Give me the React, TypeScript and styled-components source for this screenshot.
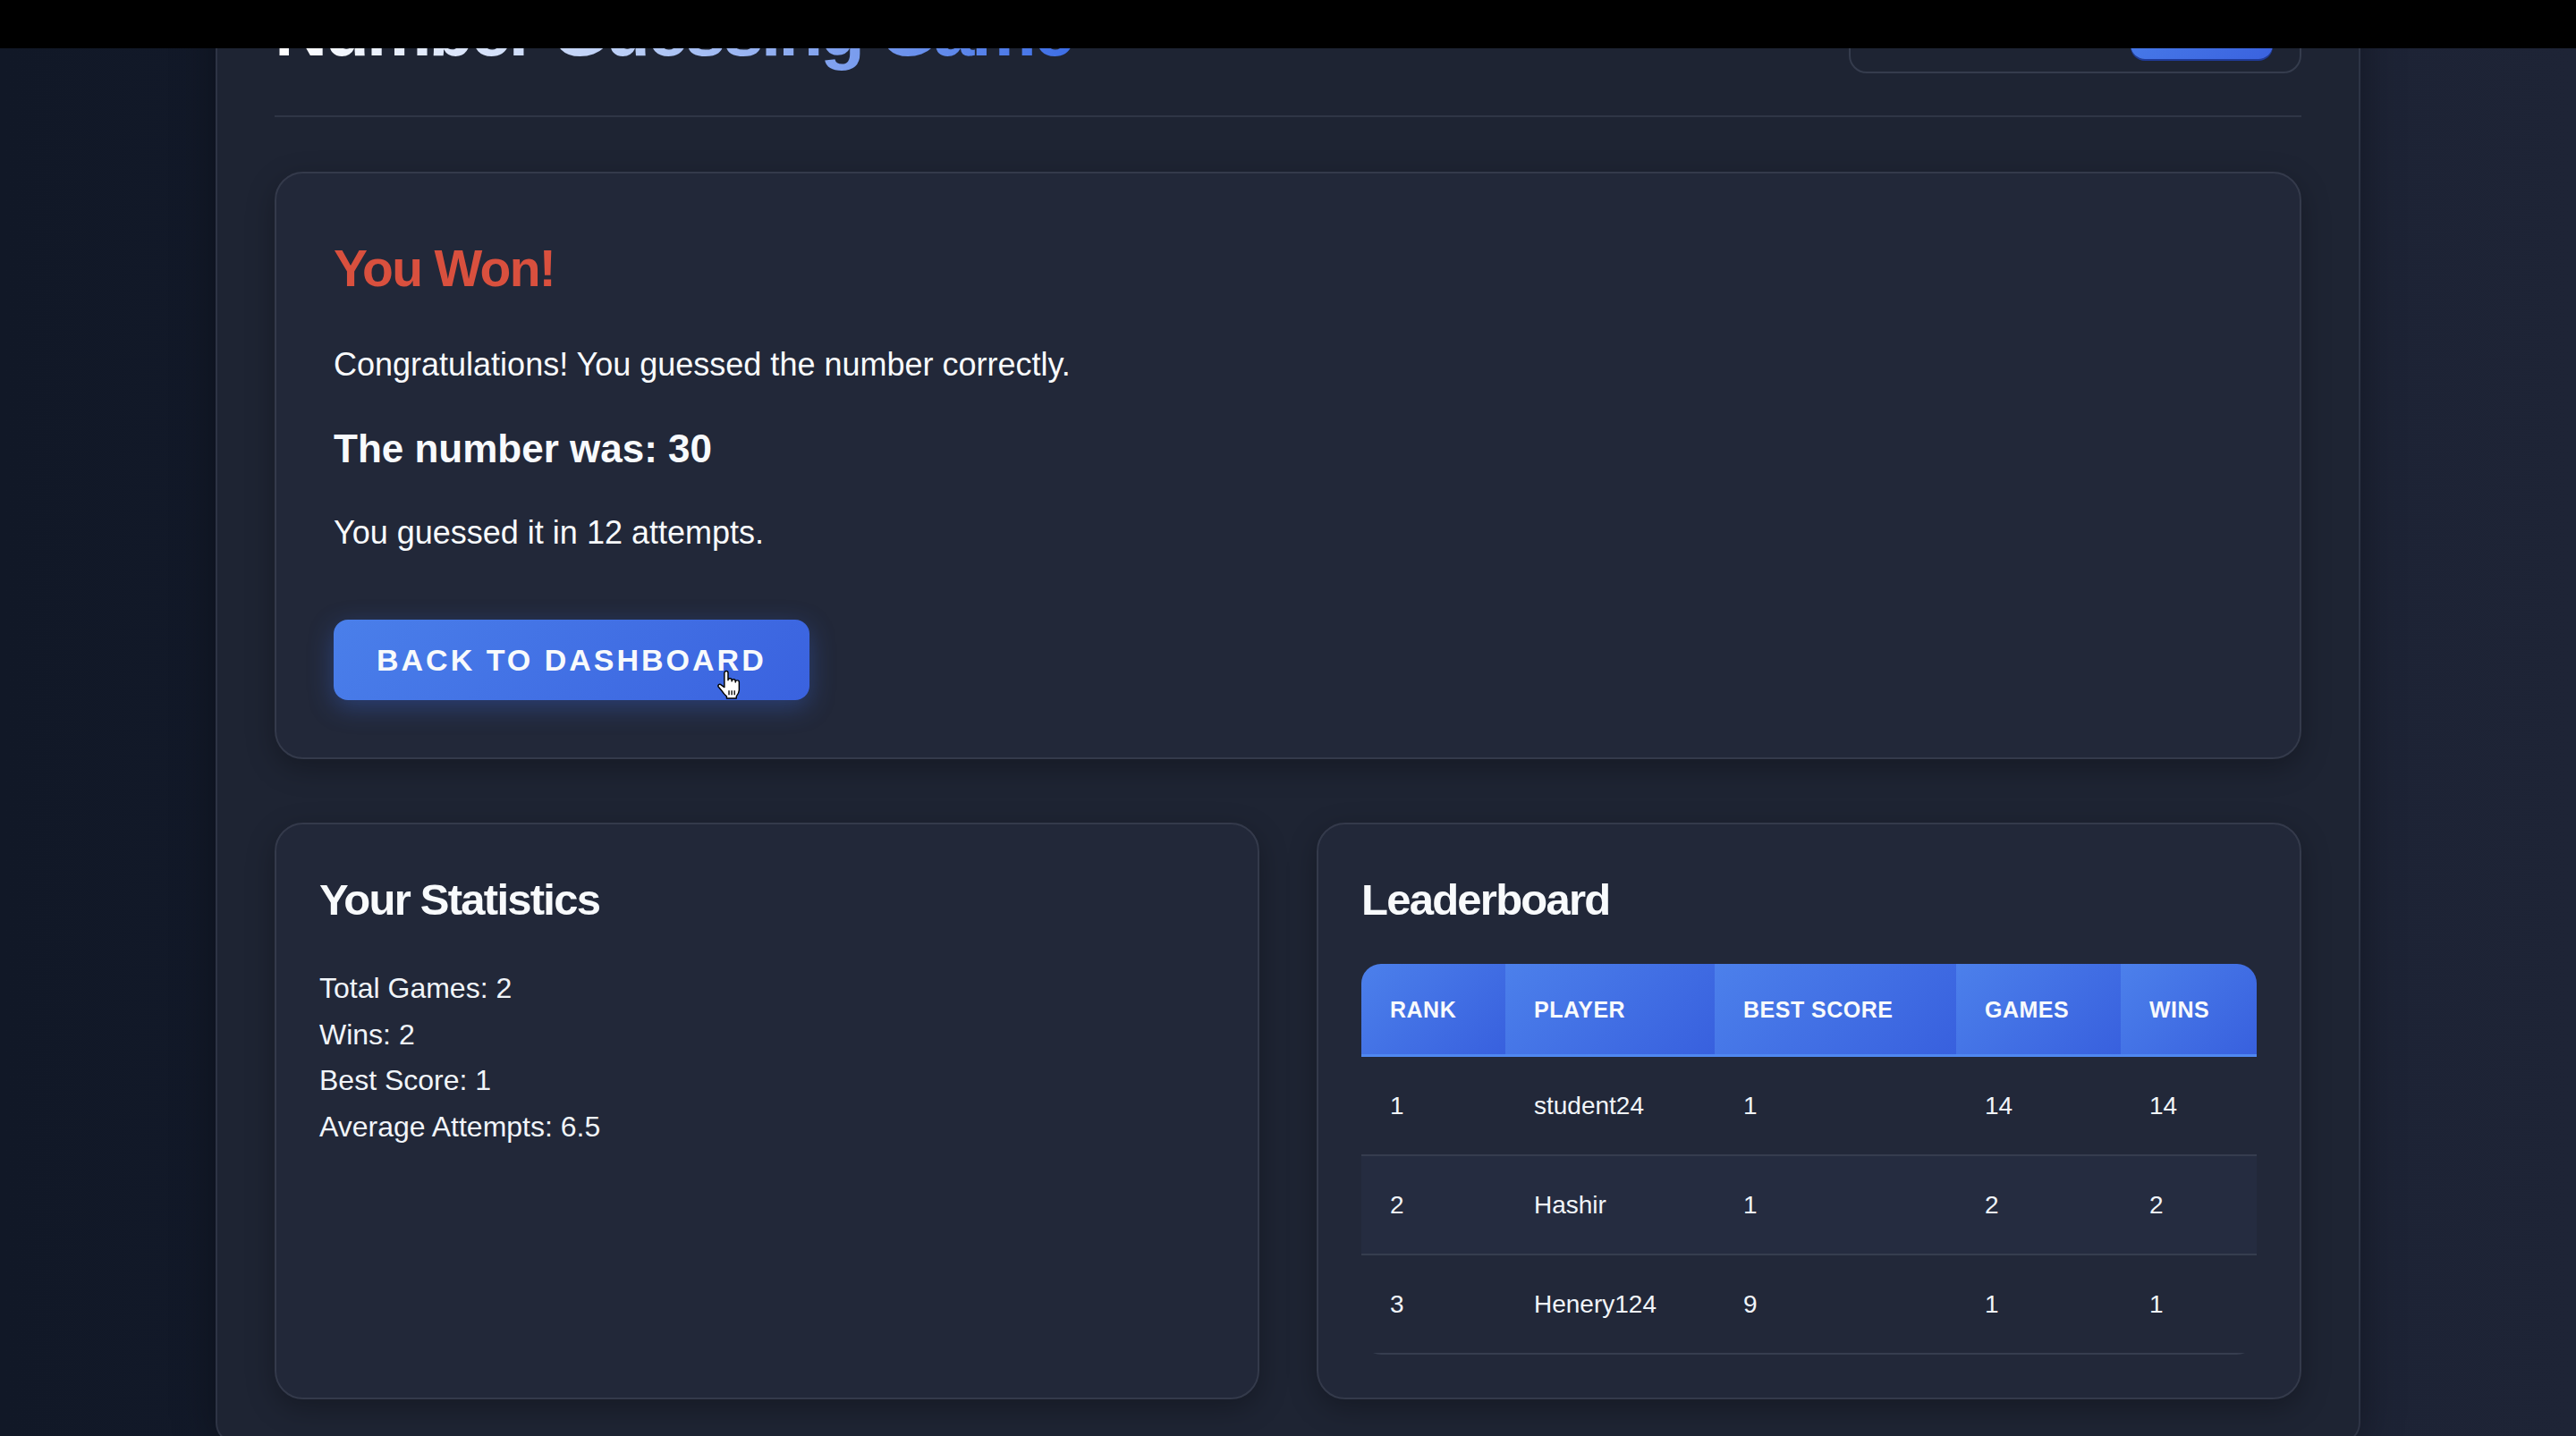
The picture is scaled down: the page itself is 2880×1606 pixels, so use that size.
import React from "react";
import styled, { createGlobalStyle } from "styled-components";

const GlobalStyle = createGlobalStyle`
  * { box-sizing: border-box; }
  html, body {
    margin: 0;
    padding: 0;
    height: 100%;
    overflow: hidden;
  }
  body {
    background: linear-gradient(90deg, #111827 0%, #171e30 50%, #1e2436 100%);
    font-family: "Liberation Sans", Arial, Helvetica, sans-serif;
    color: #f8fafc;
  }
`;

const TopBar = styled.div`
  position: fixed;
  top: 0;
  left: 0;
  right: 0;
  height: 54px;
  background: #000;
  z-index: 20;
`;

const Page = styled.main`
  width: 2398px;
  margin: -84px auto 0;
  background: #1e2433;
  border: 2px solid #2e3445;
  border-radius: 24px;
  padding: 64px 64px 48px;
  box-shadow: 0 0 48px rgba(0, 0, 0, 0.35);
`;

const Header = styled.header`
  display: flex;
  justify-content: space-between;
  align-items: flex-end;
  padding-bottom: 47px;
  border-bottom: 2px solid #2f3646;
  margin-bottom: 61px;
`;

const Title = styled.h1`
  margin: 0;
  font-size: 82px;
  line-height: 97px;
  font-weight: 700;
  letter-spacing: -3.3px;
  background: linear-gradient(90deg, #ffffff 0%, #b9cdf6 45%, #3d6ee6 100%);
  -webkit-background-clip: text;
  background-clip: text;
  color: transparent;
`;

const UserBox = styled.div`
  display: flex;
  align-items: center;
  gap: 40px;
  padding: 14px 30px;
  border: 2px solid #353c4d;
  border-radius: 20px;
`;

const Welcome = styled.span`
  font-size: 32px;
  line-height: 37px;
  color: #e2e8f0;
`;

const SmallButton = styled.button`
  height: 68px;
  padding: 0 32px;
  border: none;
  border-radius: 16px;
  font: 700 28px/32px "Liberation Sans", Arial, sans-serif;
  color: #fff;
  background: linear-gradient(135deg, #4a7fea 0%, #3a62df 100%);
  box-shadow: 0 2px 0 #1f3b9a;
`;

const Card = styled.section<{ $pad: number }>`
  display: flex;
  flex-direction: column;
  background: #222839;
  border: 2px solid #343a4b;
  border-radius: 32px;
  padding: ${(p) => p.$pad}px;
  box-shadow: 0 10px 32px rgba(0, 0, 0, 0.28);
`;

const WinTitle = styled.h2`
  margin: 9px 0 0;
  font-size: 57px;
  line-height: 66px;
  font-weight: 700;
  letter-spacing: -1.7px;
  color: #d9503e;
`;

const Message = styled.p<{ $mt: number }>`
  margin: ${(p) => p.$mt}px 0 0;
  font-size: 36px;
  line-height: 42px;
  color: #f8fafc;
`;

const Reveal = styled.h3`
  margin: 48px 0 0;
  font-size: 44px;
  line-height: 50px;
  font-weight: 700;
  color: #f8fafc;
`;

const PrimaryButton = styled.button`
  position: relative;
  align-self: flex-start;
  margin-top: 76px;
  padding: 26px 48px;
  border: none;
  border-radius: 16px;
  font: 700 34px/38px "Liberation Sans", Arial, sans-serif;
  letter-spacing: 3px;
  text-transform: uppercase;
  color: #f8fafc;
  background: linear-gradient(135deg, #4a7fea 0%, #3a62df 100%);
  box-shadow: 0 8px 28px rgba(59, 108, 230, 0.35);
`;

const Cursor = styled.svg`
  position: absolute;
  left: 426px;
  top: 56px;
  width: 31px;
  height: 34px;
`;

const Grid = styled.div`
  display: grid;
  grid-template-columns: 1fr 1fr;
  gap: 64px;
  margin-top: 71px;
`;

const SectionTitle = styled.h2`
  margin: 9px 0 44px;
  font-size: 49px;
  line-height: 55px;
  font-weight: 700;
  letter-spacing: -1.75px;
  color: #f8fafc;
`;

const StatList = styled.ul`
  list-style: none;
  margin: 2px 0 0;
  padding: 0;
`;

const StatItem = styled.li`
  font-size: 32px;
  line-height: 51.5px;
  color: #f1f5f9;
`;

const TableWrap = styled.div`
  border-radius: 22px;
  overflow: hidden;
`;

const Table = styled.table`
  width: 100%;
  border-collapse: separate;
  border-spacing: 0;
  table-layout: fixed;
`;

const Col = styled.col<{ $w: number }>`
  width: ${(p) => p.$w}px;
`;

const Th = styled.th`
  padding: 37px 32px 35px;
  text-align: left;
  font-size: 25px;
  line-height: 29px;
  font-weight: 700;
  letter-spacing: 0.5px;
  text-transform: uppercase;
  color: #f8fafc;
  background: linear-gradient(135deg, #4c80eb 0%, #3860de 100%);
  border-bottom: 3px solid #5088f1;
  white-space: nowrap;
`;

const Tr = styled.tr<{ $alt: boolean }>`
  background: ${(p) => (p.$alt ? "#252c40" : "transparent")};
`;

const Td = styled.td`
  padding: 39px 32px 38px;
  font-size: 28px;
  line-height: 32px;
  color: #f1f5f9;
  border-bottom: 2px solid #363d4f;
`;

const leaders = [
  { rank: 1, player: "student24", best: 1, games: 14, wins: 14 },
  { rank: 2, player: "Hashir", best: 1, games: 2, wins: 2 },
  { rank: 3, player: "Henery124", best: 9, games: 1, wins: 1 },
];

const colWidths = [161, 234, 270, 184, 152];

export default function App() {
  return (
    <>
      <GlobalStyle />
      <TopBar />
      <Page>
        <Header>
          <Title>Number Guessing Game</Title>
          <UserBox>
            <Welcome>Welcome, Hashir</Welcome>
            <SmallButton>Logout</SmallButton>
          </UserBox>
        </Header>

        <Card $pad={64}>
          <WinTitle>You Won!</WinTitle>
          <Message $mt={54}>Congratulations! You guessed the number correctly.</Message>
          <Reveal>The number was: 30</Reveal>
          <Message $mt={48}>You guessed it in 12 attempts.</Message>
          <PrimaryButton>
            Back to Dashboard
            <Cursor viewBox="0 0 28 33" aria-hidden="true">
              <path
                d="M9.5 3.5a2 2 0 0 1 4 0V11.5a2 2 0 0 1 4 0V12.5a2 2 0 0 1 4 0V13.5a2 2 0 0 1 4 0V22c0 3-1.5 5-3 7V31H12V29c-2-1.5-4-4-6-7L3 18.5a1.8 1.8 0 0 1 2.8-2.2L9.5 19Z"
                fill="#ffffff"
                stroke="#000000"
                strokeWidth="1.4"
                strokeLinejoin="round"
              />
              <path d="M14.5 22.5v5M17.5 22.5v5M20.5 22.5v5" stroke="#000" strokeWidth="1.3" />
            </Cursor>
          </PrimaryButton>
        </Card>

        <Grid>
          <Card $pad={48}>
            <SectionTitle>Your Statistics</SectionTitle>
            <StatList>
              <StatItem>Total Games: 2</StatItem>
              <StatItem>Wins: 2</StatItem>
              <StatItem>Best Score: 1</StatItem>
              <StatItem>Average Attempts: 6.5</StatItem>
            </StatList>
          </Card>

          <Card $pad={48}>
            <SectionTitle>Leaderboard</SectionTitle>
            <TableWrap>
              <Table>
                <colgroup>
                  {colWidths.map((w, i) => (
                    <Col key={i} $w={w} />
                  ))}
                </colgroup>
                <thead>
                  <tr>
                    <Th>Rank</Th>
                    <Th>Player</Th>
                    <Th>Best Score</Th>
                    <Th>Games</Th>
                    <Th>Wins</Th>
                  </tr>
                </thead>
                <tbody>
                  {leaders.map((r, i) => (
                    <Tr key={r.rank} $alt={i % 2 === 1}>
                      <Td>{r.rank}</Td>
                      <Td>{r.player}</Td>
                      <Td>{r.best}</Td>
                      <Td>{r.games}</Td>
                      <Td>{r.wins}</Td>
                    </Tr>
                  ))}
                </tbody>
              </Table>
            </TableWrap>
          </Card>
        </Grid>
      </Page>
    </>
  );
}
